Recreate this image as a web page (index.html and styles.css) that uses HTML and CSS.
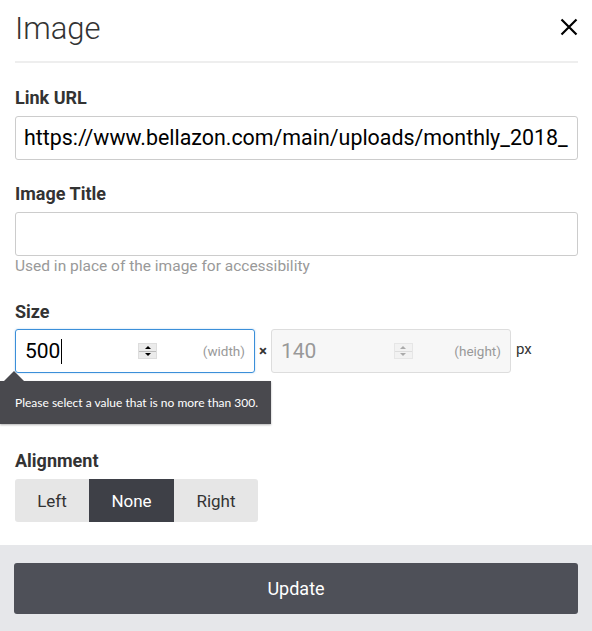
FILE: index.html
```html
<!DOCTYPE html>
<html lang="en">
<head>
  <meta charset="UTF-8" />
  <meta name="viewport" content="width=device-width, initial-scale=1.0"/>
  <title>Image</title>
  <link rel="stylesheet" href="styles.css">
</head>
<body>
  <div class="dialog">
    <div class="header">
      <h1 class="title">Image</h1>
      <button class="close" aria-label="Close">
        <svg width="18" height="18" viewBox="0 0 18 18">
          <path d="M1.5 1.5 L16.5 16.5 M16.5 1.5 L1.5 16.5" stroke="#000" stroke-width="2.2" fill="none"/>
        </svg>
      </button>
    </div>

    <div class="body">
      <div class="field">
        <label class="label">Link URL</label>
        <div class="input">https://www.bellazon.com/main/uploads/monthly_2018_</div>
      </div>

      <div class="field">
        <label class="label">Image Title</label>
        <div class="input"></div>
        <div class="help">Used in place of the image for accessibility</div>
      </div>

      <div class="field size-field">
        <label class="label">Size</label>
        <div class="size-row">
          <div class="num focus">
            <span class="value">500<span class="caret"></span></span>
            <span class="spin"><span class="up"></span><span class="down"></span></span>
            <span class="unit">(width)</span>
          </div>
          <span class="times">×</span>
          <div class="num disabled">
            <span class="value">140</span>
            <span class="spin"><span class="up"></span><span class="down"></span></span>
            <span class="unit">(height)</span>
          </div>
          <span class="px">px</span>
        </div>
        <div class="tooltip">Please select a value that is no more than 300.</div>
      </div>

      <div class="field">
        <label class="label">Alignment</label>
        <div class="btn-group">
          <button class="seg">Left</button>
          <button class="seg active">None</button>
          <button class="seg">Right</button>
        </div>
      </div>
    </div>

    <div class="footer">
      <button class="update">Update</button>
    </div>
  </div>
</body>
</html>
```

FILE: styles.css
```css
body {
  margin: 0;
  background: #fff;
  font-family: Roboto, 'Liberation Sans', sans-serif;
  color: #333;
}

.dialog {
  width: 592px;
}

.header {
  margin: 0 14px 0 15px;
  padding: 13px 0 17px;
  border-bottom: 2px solid #eee;
  display: flex;
  align-items: flex-start;
  justify-content: space-between;
}

.title {
  margin: 0;
  font-size: 31px;
  font-weight: 300;
  color: #333;
  line-height: 31px;
}

.close {
  border: none;
  background: none;
  padding: 0;
  margin-top: 5px;
  display: flex;
}

.body {
  padding: 24px 14px 0 15px;
}

.field {
  margin-bottom: 23px;
}

.label {
  display: block;
  font-size: 18px;
  font-weight: 700;
  color: #333;
  line-height: 22px;
  margin-bottom: 7px;
}

.input {
  height: 44px;
  box-sizing: border-box;
  border: 1px solid #ccc;
  border-radius: 3px;
  padding: 0 8px;
  font-size: 21.4px;
  line-height: 42px;
  color: #000;
  white-space: nowrap;
  overflow: hidden;
}

.help {
  font-size: 15.5px;
  color: #999;
  margin-top: 1px;
  line-height: 18px;
}

.field:nth-child(2) {
  margin-bottom: 26px;
}

.size-field {
  position: relative;
  margin-bottom: 77px;
}

.size-field .label {
  margin-bottom: 6px;
}

.size-row {
  display: flex;
  align-items: center;
}

.num {
  width: 240px;
  height: 44px;
  box-sizing: border-box;
  border: 1px solid #ccc;
  border-radius: 3px;
  display: flex;
  align-items: center;
  padding: 0 9px 0 9px;
}

.num.focus {
  border-color: #3b8fd9;
  box-shadow: 0 0 2px rgba(59, 143, 217, 0.4);
}

.num.disabled {
  background: #f7f7f7;
  border-color: #ddd;
}

.value {
  font-size: 21px;
  color: #000;
  width: 113px;
  display: flex;
  align-items: center;
}

.disabled .value {
  color: #999;
}

.caret {
  display: inline-block;
  width: 1px;
  height: 25px;
  background: #000;
  margin-left: 1px;
}

.spin {
  width: 19px;
  height: 16px;
  display: flex;
  flex-direction: column;
  background: #ebebeb;
  border: 1px solid #ddd;
  box-sizing: border-box;
}

.spin span {
  flex: 1;
  display: flex;
  align-items: center;
  justify-content: center;
}

.spin .up {
  border-bottom: 1px solid #bbb;
}

.spin .up::after {
  content: "";
  border-left: 3px solid transparent;
  border-right: 3px solid transparent;
  border-bottom: 3px solid #000;
}

.spin .down::after {
  content: "";
  border-left: 3px solid transparent;
  border-right: 3px solid transparent;
  border-top: 3px solid #000;
}

.disabled .spin {
  background: #f2f2f2;
  border-color: #e6e6e6;
}

.disabled .spin .up {
  border-bottom-color: #ddd;
}

.disabled .spin .up::after {
  border-bottom-color: #aaa;
}

.disabled .spin .down::after {
  border-top-color: #aaa;
}

.unit {
  margin-left: auto;
  font-size: 13.5px;
  color: #999;
}

.times {
  font-size: 15px;
  color: #333;
  margin: 0 4px;
  font-weight: 700;
}

.px {
  font-size: 15px;
  color: #333;
  margin-left: 5px;
  margin-bottom: 4px;
}

.tooltip {
  position: absolute;
  left: -15px;
  top: 80px;
  width: 256px;
  height: 43px;
  background: #49494e;
  color: #fff;
  font-family: Lato, 'Open Sans', sans-serif;
  font-size: 12px;
  line-height: 43px;
  padding-left: 15px;
  white-space: nowrap;
  box-shadow: 0 1px 2px rgba(0, 0, 0, 0.3);
}

.tooltip::before {
  content: "";
  position: absolute;
  left: 4px;
  top: -10px;
  border-left: 10px solid transparent;
  border-right: 10px solid transparent;
  border-bottom: 10px solid #49494e;
}

.btn-group {
  display: inline-flex;
  border-radius: 3px;
  overflow: hidden;
}

.seg {
  border: none;
  background: #e6e6e6;
  color: #333;
  font-family: Roboto, sans-serif;
  font-size: 17px;
  height: 43px;
  width: 74px;
  padding: 0;
}

.seg.active {
  background: #3e4047;
  color: #fff;
  width: 85px;
}

.seg:last-child {
  width: 84px;
}

.footer {
  background: #e6e7ea;
  padding: 18px 14px 17px 14px;
}

.update {
  display: block;
  width: 100%;
  height: 51px;
  border: none;
  border-radius: 3px;
  background: #4e5058;
  color: #fff;
  font-family: Roboto, sans-serif;
  font-size: 18px;
}
```
